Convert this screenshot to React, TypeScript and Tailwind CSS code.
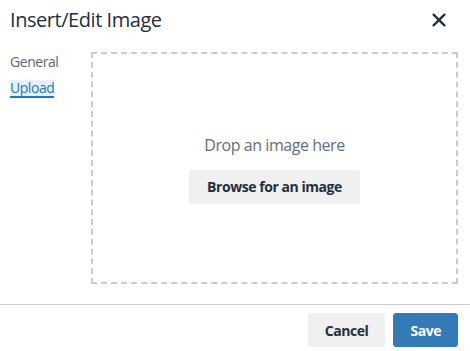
import React from "react";

function CloseIcon() {
  return (
    <svg viewBox="0 0 14 14" className="h-[14px] w-[14px]" fill="none" stroke="#222f3e" strokeWidth={2.3} strokeLinecap="round">
      <path d="M1.6 1.6l10.8 10.8M12.4 1.6L1.6 12.4" />
    </svg>
  );
}

export default function App() {
  return (
    <div className="flex h-[351px] w-[470px] flex-col overflow-hidden bg-white font-['Open_Sans',sans-serif] tracking-[-0.45px] text-[#222f3e]">
      <header className="flex h-[40px] shrink-0 items-center justify-between pl-[10px] pr-[24px]">
        <h1 className="text-[20px] leading-[26px]">Insert/Edit Image</h1>
        <button aria-label="Close" className="flex items-center">
          <CloseIcon />
        </button>
      </header>

      <div className="flex pl-[10px] pr-[12px] pt-[12px]">
        <nav className="flex w-[81px] shrink-0 flex-col items-start text-[14px]">
          <div className="leading-[20px] text-[#5c6570]">General</div>
          <div className="mt-[8px] border-b-2 border-[#207ab7] bg-[#e9f0f7] leading-[16px] text-[#207ab7]">Upload</div>
        </nav>
        <div className="flex h-[232px] flex-1 flex-col items-center justify-center border-2 border-dashed border-[#cccccc]">
          <p className="text-[16px] leading-[24px] text-[#646e79]">Drop an image here</p>
          <button className="mt-[13px] h-[34px] rounded-[3px] bg-[#f0f0f0] px-[18px] text-[14px] font-bold text-[#222f3e]">
            Browse for an image
          </button>
        </div>
      </div>

      <footer className="mt-[20px] flex justify-end gap-2 border-t border-[#cccccc] px-[12px] pt-[8px]">
        <button className="h-[34px] rounded-[3px] border border-[#f0f0f0] bg-[#f0f0f0] px-4 text-[14px] font-bold text-[#222f3e]">
          Cancel
        </button>
        <button className="h-[34px] rounded-[3px] border border-[#337ab7] bg-[#337ab7] px-4 text-[14px] font-bold text-white">
          Save
        </button>
      </footer>
    </div>
  );
}
